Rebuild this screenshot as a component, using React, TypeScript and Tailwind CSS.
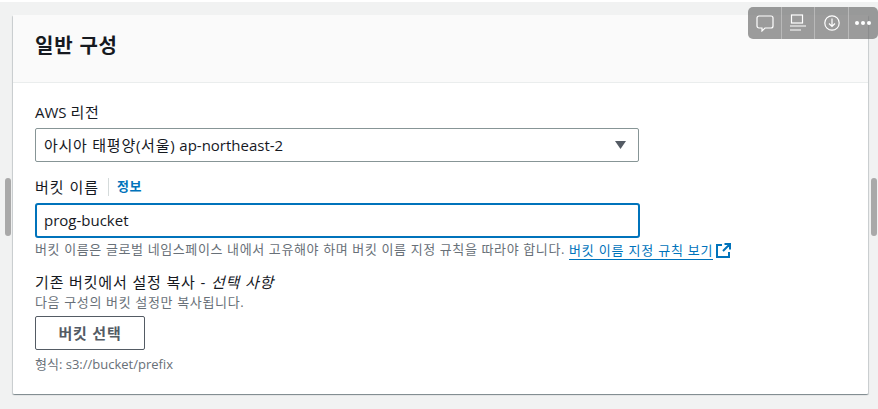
import React from "react";

const font = { fontFamily: '"Open Sans", "Noto Sans CJK KR", sans-serif' };

function Toolbar() {
  return (
    <div className="absolute left-[748px] top-[7px] flex h-[32px] w-[130px] rounded-[5px] bg-[rgba(105,105,105,0.65)] text-white">
      <div className="flex w-[34px] items-center justify-center border-r border-[rgba(255,255,255,0.3)]">
        <svg width="18" height="17" viewBox="0 0 18 17" fill="none" stroke="white" strokeWidth="1.2">
          <path d="M3 1h12a2 2 0 0 1 2 2v8a2 2 0 0 1-2 2H9l-3 3v-3H3a2 2 0 0 1-2-2V3a2 2 0 0 1 2-2z" />
        </svg>
      </div>
      <div className="flex w-[33px] items-center justify-center border-r border-[rgba(255,255,255,0.3)]">
        <svg width="16" height="18" viewBox="0 0 16 18" fill="none" stroke="white" strokeWidth="1.2">
          <rect x="1.5" y="1" width="11" height="8" />
          <path d="M0 12h16M0 16h11" />
        </svg>
      </div>
      <div className="flex w-[34px] items-center justify-center border-r border-[rgba(255,255,255,0.3)]">
        <svg width="16" height="16" viewBox="0 0 16 16" fill="none" stroke="white" strokeWidth="1.2">
          <circle cx="8" cy="8" r="7.2" />
          <path d="M8 3.5v8M5 8.5l3 3 3-3" />
        </svg>
      </div>
      <div className="flex flex-1 items-center justify-start gap-[2px] pl-[6px]">
        <span className="h-[4px] w-[4px] rounded-full bg-white" />
        <span className="h-[4px] w-[4px] rounded-full bg-white" />
        <span className="h-[4px] w-[4px] rounded-full bg-white" />
      </div>
    </div>
  );
}

export default function App() {
  return (
    <div style={font} className="relative h-[409px] w-[878px] overflow-hidden bg-[#f1f2f2] pl-[13px] pr-[10px] pt-[15px]">
      <div className="absolute left-0 top-0 h-[2px] w-full bg-white" />
      <div className="h-[379px] rounded-[1px] bg-white shadow-[0_1px_1px_0_rgba(0,28,36,0.3),1px_1px_1px_0_rgba(0,28,36,0.15),-1px_1px_1px_0_rgba(0,28,36,0.15)]">
        <div className="flex h-[68px] items-center border-b border-[#eaeded] bg-[#fafafa] pl-[22px] pb-[5px]">
          <h2 className="text-[20px] font-semibold leading-[22px] tracking-[0.8px] text-[#16191f]">일반 구성</h2>
        </div>
        <div className="pl-[22px] pt-[19px]">
          <div className="text-[15px] leading-[20px] text-[#16191f]">AWS <span className="tracking-[0.8px]">리전</span></div>
          <div className="mt-[6px] flex h-[34px] w-[604px] items-center justify-between rounded-[2px] border border-[#879596] bg-white pl-[8px] pr-[12px] text-[15px] text-[#16191f]">
            <span><span className="tracking-[0.75px]">아시아 태평양(서울)</span> ap-northeast-2</span>
            <svg width="11" height="8" viewBox="0 0 11 8"><path d="M0 0h11L5.5 8z" fill="#545b64" /></svg>
          </div>
          <div className="mt-[15px] flex h-[20px] items-center text-[15px] text-[#16191f]">
            <span className="tracking-[1px]">버킷 이름</span>
            <span className="ml-[9px] h-[18px] w-px bg-[#d5dbdb]" />
            <span className="ml-[8px] text-[13px] font-semibold tracking-[0.5px] text-[#0073bb]">정보</span>
          </div>
          <div className="mt-[6px] flex h-[35px] w-[605px] items-center rounded-[3px] border-2 border-[#0073bb] bg-white pl-[7px] text-[15px] text-[#16191f]">
            prog-bucket
          </div>
          <div className="mt-[2px] flex h-[20px] items-center whitespace-nowrap text-[13px] text-[#687078]">
            <span className="tracking-[0.62px]">버킷 이름은 글로벌 네임스페이스 내에서 고유해야 하며 버킷 이름 지정 규칙을 따라야 합니다.</span>
            <span className="ml-[4px] border-b border-[#0073bb] leading-[18px] tracking-[0.8px] text-[#0073bb]">버킷 이름 지정 규칙 보기</span>
            <svg className="ml-[3px]" width="15" height="15" viewBox="0 0 15 15" fill="none" stroke="#0073bb" strokeWidth="2">
              <path d="M6 2H1v12h12V9M8.5 1H14v5.5M14 1L7 8" />
            </svg>
          </div>
          <div className="mt-[13px] text-[15px] leading-[18px] tracking-[0.85px] text-[#16191f]">
            기존 버킷에서 설정 복사 - <i>선택 사항</i>
          </div>
          <div className="mt-[2px] text-[13px] leading-[18px] tracking-[0.65px] text-[#687078]">다음 구성의 버킷 설정만 복사됩니다.</div>
          <button style={font} className="mt-[5px] block h-[34px] w-[110px] rounded-[2px] border border-[#545b64] bg-white text-[15px] font-semibold tracking-[0.8px] text-[#545b64]">
            버킷 선택
          </button>
          <div className="mt-[5px] text-[13px] leading-[18px] text-[#687078]">형식: s3://bucket/prefix</div>
        </div>
      </div>
      <div className="absolute left-[5px] top-[178px] h-[58px] w-[6px] rounded-[3px] bg-[#a9a9a9]" />
      <div className="absolute left-[871px] top-[178px] h-[58px] w-[6px] rounded-[3px] bg-[#a9a9a9]" />
      <Toolbar />
    </div>
  );
}
